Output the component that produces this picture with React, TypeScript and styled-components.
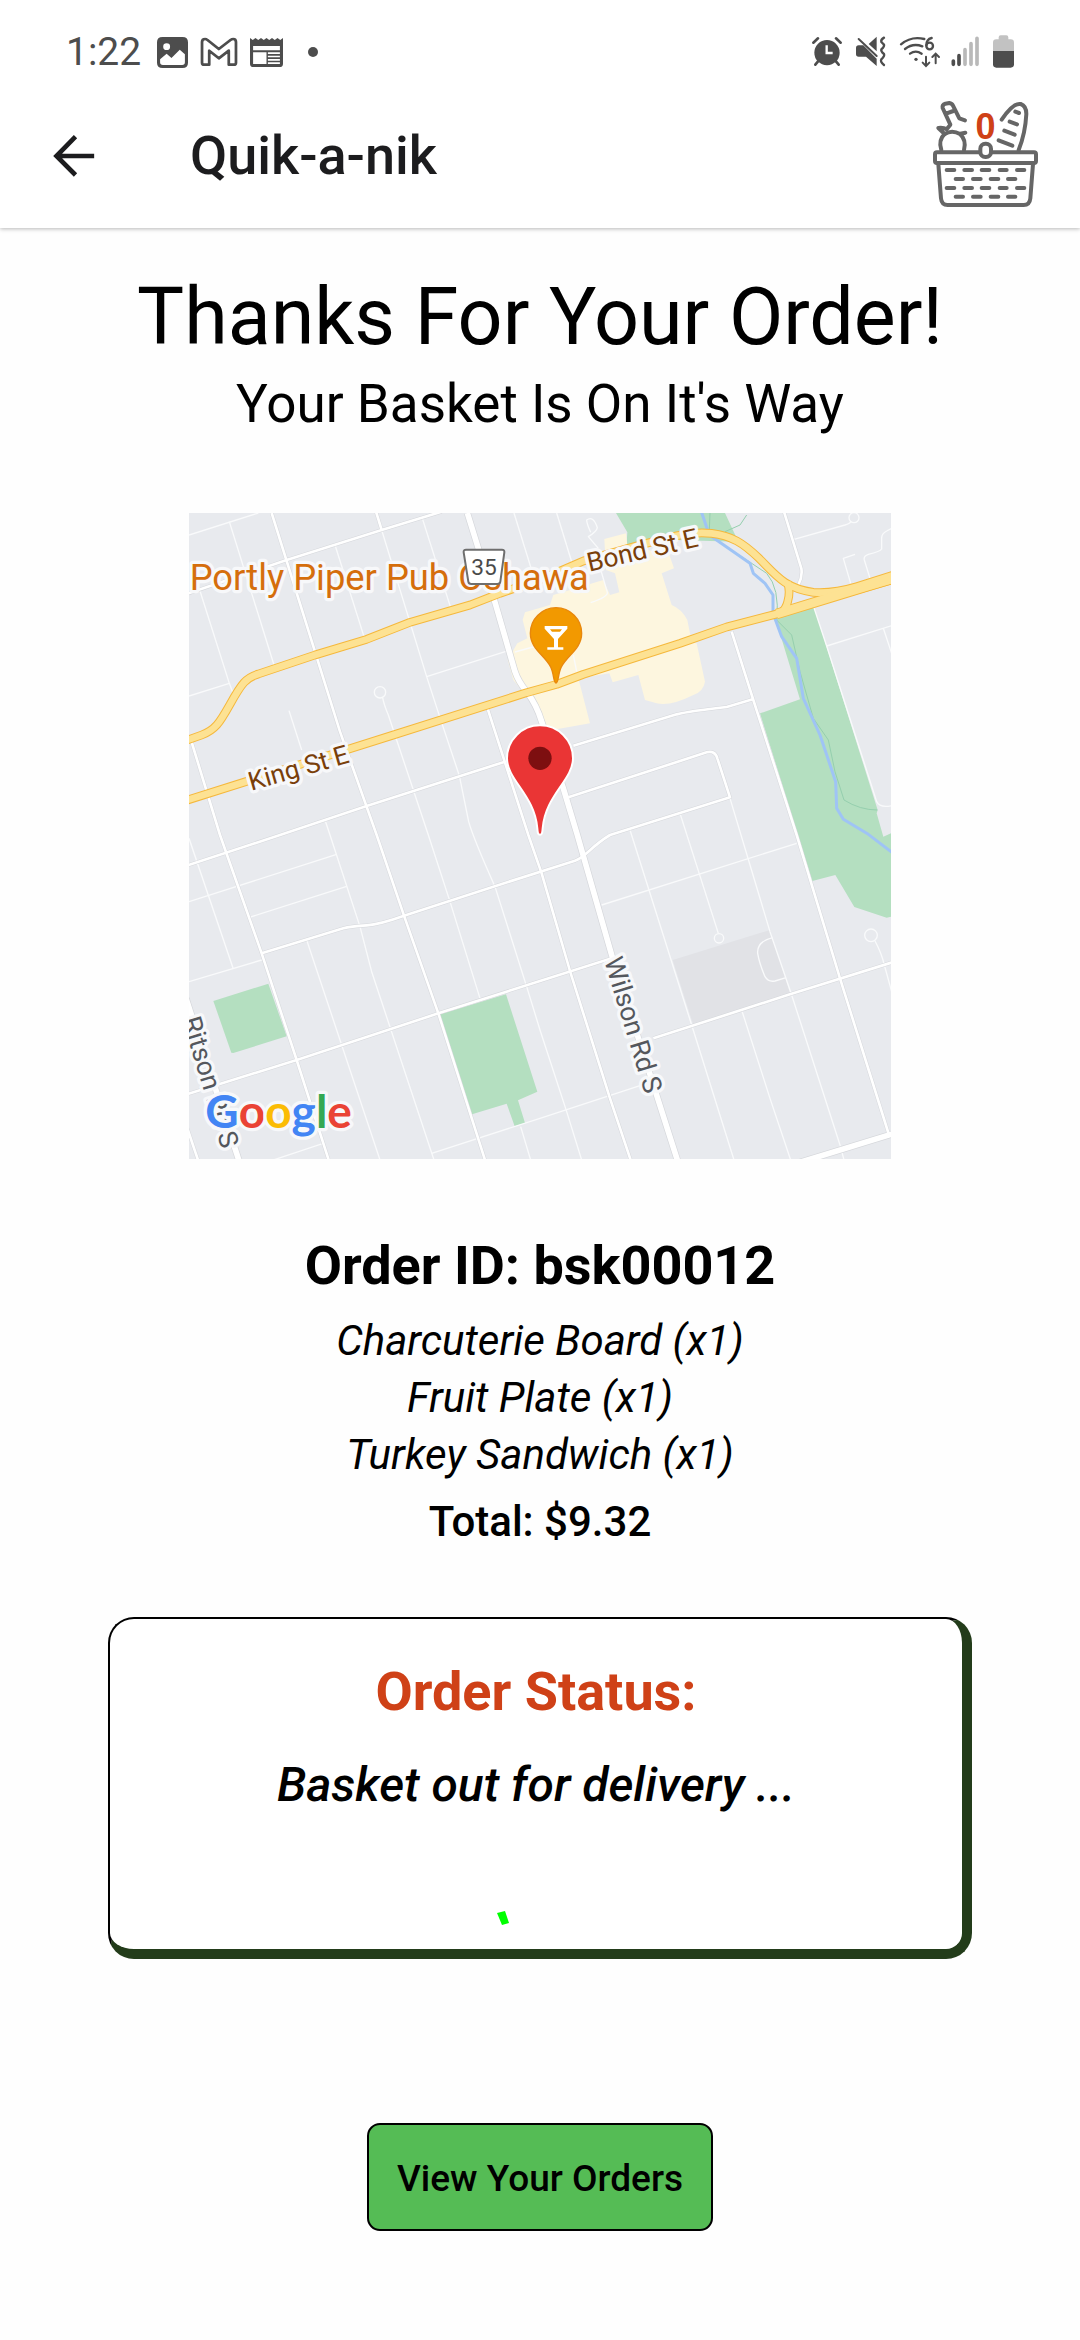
import React from "react";
import styled, { createGlobalStyle } from "styled-components";

const GlobalStyle = createGlobalStyle`
  *, *::before, *::after { box-sizing: border-box; }
  body {
    margin: 0;
    background: #fefefe;
    color: #000;
    font-family: Roboto, "Liberation Sans", sans-serif;
  }
`;

const ink = "#4d4d4d";
const accent = "#cf4117";

const Screen = styled.div`
  min-height: 100vh;
  display: flex;
  flex-direction: column;
`;

const StatusBar = styled.div`
  position: relative;
  z-index: 1;
  height: 84px;
  padding: 20px 66px 0;
  display: flex;
  justify-content: space-between;
  align-items: flex-start;
  background: #fff;
  color: ${ink};
`;

const StatusGroup = styled.div<{ $gap: number }>`
  display: flex;
  align-items: center;
  height: 64px;
  gap: ${(p) => p.$gap}px;
`;

const Clock = styled.time`
  font-size: 39px;
  line-height: 64px;
  margin-right: 3px;
`;

const StatusIcon = styled.svg<{ $w: number }>`
  display: block;
  width: ${(p) => p.$w}px;
  height: 40px;
  overflow: visible;
`;

const Header = styled.header`
  position: relative;
  height: 144px;
  padding: 0 42px 0 46px;
  display: flex;
  align-items: center;
  background: #fff;
  box-shadow: 0 1px 4px rgba(0, 0, 0, 0.28);
`;

const IconButton = styled.button`
  display: flex;
  padding: 0;
  border: 0;
  background: none;
  color: inherit;
  cursor: pointer;
`;

const BackButton = styled(IconButton)`
  width: 56px;
  height: 56px;
  align-items: center;
  justify-content: center;
`;

const AppTitle = styled.div`
  flex: 1;
  padding-left: 88px;
  color: #1c1c1e;
  font-size: 54px;
  line-height: 62px;
  font-weight: 500;
`;

const BasketButton = styled(IconButton)`
  position: relative;
  margin-bottom: 4px;
`;

const BasketCount = styled.span`
  position: absolute;
  left: 0;
  right: 0;
  top: 6px;
  text-align: center;
  color: ${accent};
  font-size: 36px;
  line-height: 42px;
  font-weight: 700;
`;

const Main = styled.main`
  display: flex;
  flex-direction: column;
  align-items: center;
  padding: 42px 0 96px;
  text-align: center;
`;

const Heading = styled.h1`
  margin: 0;
  font-size: 79px;
  line-height: 94px;
  font-weight: 400;
`;

const Subheading = styled.p`
  margin: 9px 0 0;
  font-size: 53px;
  line-height: 62px;
`;

const MapFrame = styled.svg`
  display: block;
  width: 65%;
  height: auto;
  margin: 78px 0 76px;
  background: #e8eaee;
`;

const MapLabel = styled.text<{ $size: number; $color: string }>`
  font-family: Roboto, "Liberation Sans", sans-serif;
  font-size: ${(p) => p.$size}px;
  fill: ${(p) => p.$color};
  stroke: #f7f8fa;
  stroke-width: 20px;
  stroke-linejoin: round;
  paint-order: stroke;
`;

const MapBrand = styled(MapLabel)`
  font-family: Lato, "Open Sans", sans-serif;
  font-weight: 700;
`;

const OrderId = styled.h2`
  margin: 0;
  font-size: 54px;
  line-height: 62px;
  font-weight: 700;
`;

const Items = styled.ul`
  list-style: none;
  margin: 15px 0 10px;
  padding: 0;
`;

const Item = styled.li`
  font-size: 42px;
  line-height: 57px;
  font-style: italic;
`;

const Total = styled.p`
  margin: 0;
  font-size: 42px;
  line-height: 57px;
  font-weight: 500;
`;

const StatusCard = styled.section`
  width: 80%;
  margin: 67px 0 164px;
  padding: 42px 24px 22px;
  border: 2px solid #000;
  border-right: 10px solid #233c1a;
  border-bottom: 10px solid #233c1a;
  border-radius: 26px;
  background: #fff;
`;

const StatusTitle = styled.h2`
  margin: 0;
  color: ${accent};
  font-size: 54px;
  line-height: 62px;
  font-weight: 700;
`;

const StatusText = styled.p`
  margin: 34px 0 98px;
  font-size: 48px;
  line-height: 56px;
  font-weight: 500;
  font-style: italic;
`;

const Spinner = styled.svg`
  display: block;
  width: 78px;
  height: 16px;
  margin: 0 auto;
`;

const OrdersButton = styled.button`
  padding: 32px 28px 28px;
  border: 2px solid #000;
  border-radius: 13px;
  background: #55bc55;
  color: #000;
  font-family: inherit;
  font-size: 37px;
  line-height: 44px;
  font-weight: 500;
  cursor: pointer;
`;

const mainRoads = [
  "M862 24L943 285L1005 500Q1015 530 1040 560Q1070 600 1085 650L1150 850L1192 990L1295 1350L1425 1755L1492 1965",
  "M1840 1978L2140 1886",
  "M18 1480L178 1970",
];

const roads = [
  "M275 24L480 680L590 990L672 1232L775 1525L915 1965",
  "M33 705L120 990L245 1345L350 1665L446 1965",
  "M20 267L320 165L605 75L785 20",
  "M588 20L605 75",
  "M20 1082L300 990L560 903L975 770",
  "M922 608L1045 990L1085 1105L1170 1398L1290 1780L1352 1965",
  "M245 1345L490 1270Q510 1264 560 1261Q600 1258 672 1232L940 1145L1185 1067Q1200 1062 1225 1040Q1260 1008 1290 990L1650 877L1612 760Q1605 735 1580 742L1165 877",
  "M1180 722L1490 628Q1530 618 1640 606L1718 583",
  "M1655 380L1720 585L1850 990L1980 1420L2127 1890",
  "M20 1768L350 1665L775 1525L1080 1428L1300 1358",
  "M1420 1600L1830 1468L2140 1371",
  "M1812 20L1864 190Q1868 215 1855 240",
  "M22 1870L54 1965",
];

const lanes = [
  "M27 90L235 24",
  "M148 50L282 480",
  "M60 258L148 535L158 562",
  "M27 573L148 535",
  "M465 120L552 395",
  "M727 40L812 308",
  "M605 75L690 352L740 515L778 632L838 812L866 950Q880 1000 945 1145L1040 1445L1080 1575L1160 1820L1205 1965",
  "M608 578Q612 600 625 630L745 990L810 1190L900 1480",
  "M740 515L985 437M1005 441L1080 420",
  "M327 617L365 735",
  "M435 945L450 990L540 1265L575 1400L762 1965",
  "M380 1305L485 1620L600 1965",
  "M27 1000L160 1392",
  "M27 1190L470 1048",
  "M208 1237L500 1144",
  "M27 1430L245 1365",
  "M280 1965L430 1915",
  "M755 1945L1080 1840L1380 1742",
  "M1022 1865L1052 1965",
  "M1002 24L1075 260",
  "M1130 24L1178 180",
  "M1180 450L1190 500",
  "M1265 1200L1850 1015",
  "M1350 975L1535 1560L1662 1965",
  "M1500 925L1615 1285",
  "M1650 880L1770 1280L1835 1470L1980 1920L1992 1965",
  "M1685 1515L1770 1780L1832 1965",
  "M1778 1298Q1730 1310 1733 1345Q1738 1375 1755 1415Q1765 1432 1785 1428L1818 1418",
  "M2085 1308Q2105 1345 2113 1380L2135 1460",
  "M1842 103L1995 60Q2010 55 2012 50",
  "M1902 308L1940 423L2090 890Q2100 910 2135 902",
  "M1940 423L2135 362M2110 370L2135 445",
  "M2012 235L1990 160L2025 148",
  "M2070 220L2053 165Q2050 153 2065 148Q2100 140 2105 132V98Q2106 85 2120 78L2135 70",
  "M1258 180L1282 262Q1285 275 1232 293",
  "M1255 130L1225 95Q1250 80 1252 68Q1240 30 1220 45Q1220 55 1232 82",
];

const bondStreet =
  "M20 706L65 690C105 675 118 655 150 598C185 535 198 518 235 507L405 450L560 403L690 352L870 300L960 265L1090 220L1210 168L1380 120L1490 92Q1545 80 1595 85C1655 92 1690 115 1735 158C1785 207 1812 250 1900 262Q1960 266 2030 245L2140 210";
const kingStreet =
  "M20 886L640 690L1040 563L1130 538L1210 508L1500 415L1640 366L1790 327L1960 275L2140 224";
const ramp = "M1822 232Q1832 260 1823 290Q1818 312 1802 324";

const DeliveryMap = () => (
  <MapFrame viewBox="27 24 2106 1938" role="img" aria-label="Delivery map">
    <g fill="#b4dfc0">
      <path d="M1308 24L1342 82L1338 140L1480 105L1675 110L1635 24Z" />
      <path d="M1786 340L1902 305L2093 915L2090 925L2110 995L2133 985V1235L2120 1238L2023 1206L1966 1110L1897 1128L1740 625L1860 583Z" />
      <path d="M100 1488L265 1436L320 1594L160 1644L154 1643Z" />
      <path d="M780 1528L978 1468L1072 1760L1014 1786L1035 1854L1004 1864L980 1796L876 1828Z" />
    </g>
    <path d="M1478 1365L1770 1275L1830 1465L1540 1560Z" fill="#e1e2e6" />
    <path
      d="M1035 322L1110 300L1120 270L1270 225L1290 270L1318 262L1305 205L1278 195L1273 102L1338 85L1342 120L1468 150L1482 190L1445 205L1475 300Q1505 312 1522 345L1535 410L1550 415L1575 530Q1570 560 1540 570Q1470 605 1430 595L1395 585L1375 510L1298 532L1288 505L1195 520L1230 655L1100 678L1060 600L1000 525L983 465L1012 415L1042 400L1028 345Z"
      fill="#fdf6df"
    />
    <g fill="none" strokeLinejoin="round">
      <g stroke="#f9fafb" strokeWidth="4">
        {lanes.map((d) => (
          <path key={d} d={d} />
        ))}
        <circle cx="600" cy="562" r="17" />
        <circle cx="1617" cy="1300" r="14" />
        <circle cx="2073" cy="1291" r="19" />
        <circle cx="2022" cy="38" r="15" />
      </g>
      <path
        d="M1590 24L1588 75M1635 80L1680 60L1700 30M1592 95L1700 165L1760 205Q1800 250 1790 345L1835 390L1860 500L1900 640L1945 705L1965 800L1992 885Q2040 915 2092 915"
        stroke="#95cfae"
        strokeWidth="3"
      />
      <path
        d="M1564 20L1588 90L1710 175L1720 205L1755 235L1779 270V325L1805 395L1850 460L1870 580L1920 690L1967 830L1970 910L1990 943L2065 988L2140 1045"
        stroke="#9fc4f5"
        strokeWidth="9"
      />
      <g stroke="#d5d7db" strokeWidth="11">
        {roads.map((d) => (
          <path key={d} d={d} />
        ))}
      </g>
      <g stroke="#d5d7db" strokeWidth="21">
        {mainRoads.map((d) => (
          <path key={d} d={d} />
        ))}
      </g>
      <g stroke="#fff" strokeWidth="8">
        {roads.map((d) => (
          <path key={d} d={d} />
        ))}
      </g>
      <g stroke="#fff" strokeWidth="17">
        {mainRoads.map((d) => (
          <path key={d} d={d} />
        ))}
      </g>
      <g stroke="#f5b83c">
        <path d={bondStreet} strokeWidth="26" />
        <path d={kingStreet} strokeWidth="26" />
        <path d="M1790 327L1960 275L2140 220" strokeWidth="32" />
        <path d={ramp} strokeWidth="26" />
      </g>
      <g stroke="#fde293">
        <path d={bondStreet} strokeWidth="20" />
        <path d={kingStreet} strokeWidth="20" />
        <path d="M1790 327L1960 275L2140 220" strokeWidth="26" />
        <path d={ramp} strokeWidth="20" />
      </g>
    </g>

    <MapLabel $size={109} $color="#d56e0c" x="29" y="255">
      Portly Piper Pub Oshawa
    </MapLabel>
    <MapLabel $size={78} $color="#7a3f0a" transform="translate(214 857) rotate(-16)">
      King St E
    </MapLabel>
    <MapLabel $size={79} $color="#7a3f0a" transform="translate(1228 200) rotate(-13)">
      Bond St E
    </MapLabel>
    <MapLabel $size={80} $color="#54575d" transform="translate(1272 1366) rotate(73)">
      Wilson Rd S
    </MapLabel>
    <MapLabel $size={80} $color="#54575d" transform="translate(6 1544) rotate(73)">
      Ritson Rd S
    </MapLabel>

    <path
      d="M858 134H966Q974 134 973 142L961 230Q960 237 952 237H874Q866 237 865 230L851 142Q850 134 858 134Z"
      fill="#fff"
      stroke="#6e6e6e"
      strokeWidth="6"
    />
    <text x="912" y="210" textAnchor="middle" fontSize="68" fontFamily="Roboto, sans-serif" fill="#4a4a4a">
      35
    </text>

    <path
      d="M1128 534C1120 534 1122 505 1112 486C1096 452 1051 432 1051 385A77 77 0 0 1 1205 385C1205 432 1160 452 1144 486C1134 505 1136 534 1128 534Z"
      fill="#f29900"
      stroke="#e8870c"
      strokeWidth="4"
    />
    <path
      d="M1094 363H1162V371L1134 402V427H1150V434H1102V427H1122V402L1094 371ZM1110 373L1116 380H1140L1146 373Z"
      fill="#fff"
      fillRule="evenodd"
    />
    <path
      d="M1080 989C1074 989 1073 985 1072 970C1064 870 981 825 981 760A99 99 0 0 1 1179 760C1179 825 1096 870 1088 970C1087 985 1086 989 1080 989Z"
      fill="#ea3535"
      stroke="#fff"
      strokeWidth="6"
    />
    <circle cx="1080" cy="760" r="35" fill="#7d0f10" />

    <MapBrand $size={138} $color="#4285f4" x="76" y="1870">
      <tspan fill="#4285f4">G</tspan>
      <tspan fill="#ea4335">o</tspan>
      <tspan fill="#fbbc05">o</tspan>
      <tspan fill="#4285f4">g</tspan>
      <tspan fill="#34a853">l</tspan>
      <tspan fill="#ea4335">e</tspan>
    </MapBrand>
  </MapFrame>
);

const NotificationIcons = () => (
  <>
    <StatusIcon $w={31} viewBox="456 96 90 120" preserveAspectRatio="none" fill={ink} aria-hidden="true">
      <path
        fillRule="evenodd"
        d="M472 111H530Q546 111 546 127V188Q546 204 530 204H472Q456 204 456 188V127Q456 111 472 111ZM484 130A10 10 0 1 0 484 150A10 10 0 1 0 484 130ZM465 178V187Q465 195 473 195H529Q537 195 537 187V163L522 149L498 174L484 161Z"
      />
    </StatusIcon>
    <StatusIcon $w={36} viewBox="585 96 105 120" preserveAspectRatio="none" fill="none" stroke={ink} strokeWidth="8" strokeLinejoin="round" aria-hidden="true">
      <path d="M588 126Q588 117 597 117Q600 117 604 120L637 147L671 120Q675 117 679 117Q687 117 687 126V188Q687 194 681 194H666V152L637 175L609 152V194H594Q588 194 588 188Z" />
    </StatusIcon>
    <StatusIcon $w={33} viewBox="726 96 96 120" preserveAspectRatio="none" fill={ink} aria-hidden="true">
      <path
        fillRule="evenodd"
        d="M726 114L734 120L742 114L750 120L758 114L766 120L774 114L782 120L790 114L798 120L806 114L814 120L822 114V191Q822 201 812 201H736Q726 201 726 191ZM735 138V151H813V138ZM735 157V192H774V157ZM778 157V162H813V157ZM778 167V172H813V167ZM778 177V182H813V177ZM778 187V192H813V187Z"
      />
    </StatusIcon>
    <StatusIcon $w={34} viewBox="845 96 102 120" fill={ink} aria-hidden="true">
      <circle cx="896" cy="156" r="15" />
    </StatusIcon>
  </>
);

const SystemIcons = () => (
  <>
    <StatusIcon $w={30} viewBox="92 96 90 120" fill={ink} aria-hidden="true">
      <circle cx="137" cy="158" r="38" />
      <path
        d="M96 128L110 115M178 128L164 115M112 182L102 194M162 182L172 194"
        stroke={ink}
        strokeWidth="8"
        strokeLinecap="round"
      />
      <path d="M136 136V159H154" stroke="#fff" strokeWidth="7" fill="none" />
    </StatusIcon>
    <StatusIcon $w={30} viewBox="228 96 90 120" fill={ink} aria-hidden="true">
      <path d="M236 136H250L290 176V198L258 170H236Q228 170 228 162V144Q228 136 236 136ZM290 110V154L266 132Z" />
      <path d="M236 117L290 168" stroke={ink} strokeWidth="6" strokeLinecap="round" />
      <path
        d="M312 113Q302 118 304 126L312 134Q314 140 304 148Q302 154 312 162Q315 168 304 178Q300 186 312 195"
        fill="none"
        stroke={ink}
        strokeWidth="7"
        strokeLinecap="round"
      />
    </StatusIcon>
    <StatusIcon $w={37} viewBox="361 96 111 120" fill="none" stroke={ink} strokeWidth="7" strokeLinecap="round" aria-hidden="true">
      <path d="M364 133Q395 107 434 117M376 147Q400 128 428 139M391 161Q408 149 426 161" />
      <circle cx="409" cy="178" r="5" fill={ink} stroke="none" />
      <path d="M456 114Q440 118 440 136" />
      <circle cx="450" cy="138" r="10" />
      <path d="M439 170V197M429 188L439 198L449 188M468 190V163M458 171L468 161L478 171" strokeWidth="6" />
    </StatusIcon>
    <StatusIcon $w={28} viewBox="510 96 84 120" strokeWidth="11" strokeLinecap="round" aria-hidden="true">
      <path d="M517 183V193M534 167V193" stroke={ink} />
      <path d="M552 149V193M570 131V193M588 115V193" stroke="#b9b9b9" />
    </StatusIcon>
    <StatusIcon $w={21} viewBox="639 96 63 120" aria-hidden="true">
      <path d="M656 112Q656 106 662 106H679Q685 106 685 112V118H692Q702 118 702 128V153H639V128Q639 118 649 118H656Z" fill="#c2c2c2" />
      <path d="M639 153H702V193Q702 203 692 203H649Q639 203 639 193Z" fill={ink} />
    </StatusIcon>
  </>
);

const BasketIcon = () => (
  <svg width="105" height="108" viewBox="459 300 315 324" fill="none" stroke="#666" strokeWidth="12" strokeLinecap="round" strokeLinejoin="round" aria-hidden="true">
    <path d="M471 457H762Q768 457 768 463V483Q768 489 762 489H471Q465 489 465 483V463Q465 457 471 457" />
    <path d="M475 492L483 595Q485 615 503 615H731Q749 615 751 595L759 492" />
    <rect x="601" y="431" width="32" height="40" rx="15" fill="#fff" />
    <path d="M484 450Q474 420 494 402Q516 388 540 402Q560 420 552 450" />
    <path d="M494 402L475 384Q490 382 500 388L511 374L488 324Q486 314 496 311L508 309Q516 310 519 317L538 355L555 361M498 341L520 333M541 401L556 398" />
    <path d="M665 359Q700 308 722 312Q739 318 739 342Q736 400 716 450" />
    <path d="M706 335L717 339M689 365L711 373M673 392L704 404M656 421L697 437" />
    <path d="M500 510H523M553 510H576M605 510H628M659 510H680M711 510H733M527 537H549M579 537H602M632 537H655M684 537H706M500 564H523M553 564H576M605 564H628M659 564H680M711 564H733M527 590H549M579 590H602M632 590H655M684 590H706" />
  </svg>
);

const orderItems = ["Charcuterie Board (x1)", "Fruit Plate (x1)", "Turkey Sandwich (x1)"];

export default function App() {
  return (
    <Screen>
      <GlobalStyle />
      <StatusBar>
        <StatusGroup $gap={13}>
          <Clock>1:22</Clock>
          <NotificationIcons />
        </StatusGroup>
        <StatusGroup $gap={14}>
          <SystemIcons />
        </StatusGroup>
      </StatusBar>

      <Header>
        <BackButton type="button" aria-label="Back">
          <svg width="42" height="42" viewBox="153 401 123 126" fill="none" stroke="#1c1c1e" strokeWidth="14" aria-hidden="true">
            <path d="M219 406L162 464L219 521M164 464H275" />
          </svg>
        </BackButton>
        <AppTitle>Quik-a-nik</AppTitle>
        <BasketButton type="button" aria-label="Basket, 0 items">
          <BasketIcon />
          <BasketCount>0</BasketCount>
        </BasketButton>
      </Header>

      <Main>
        <Heading>Thanks For Your Order!</Heading>
        <Subheading>Your Basket Is On It's Way</Subheading>
        <DeliveryMap />
        <OrderId>Order ID: bsk00012</OrderId>
        <Items>
          {orderItems.map((item) => (
            <Item key={item}>{item}</Item>
          ))}
        </Items>
        <Total>Total: $9.32</Total>
        <StatusCard>
          <StatusTitle>Order Status:</StatusTitle>
          <StatusText>Basket out for delivery ...</StatusText>
          <Spinner viewBox="0 0 78 16" aria-hidden="true">
            <path d="M0 2L8 0L12 12L5 14Z" fill="#00ff00" />
          </Spinner>
        </StatusCard>
        <OrdersButton type="button">View Your Orders</OrdersButton>
      </Main>
    </Screen>
  );
}
